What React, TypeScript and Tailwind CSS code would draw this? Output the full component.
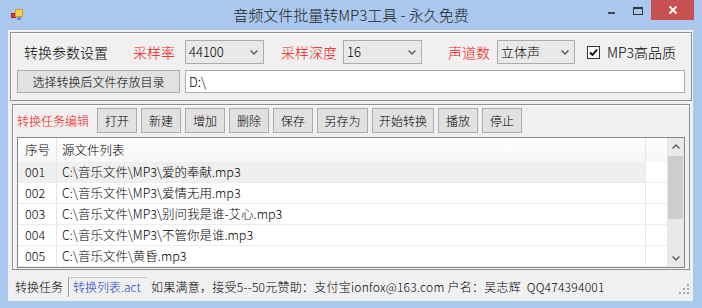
import React from "react";

const rows = [
  { no: "001", path: "C:\\音乐文件\\MP3\\爱的奉献.mp3", sel: true },
  { no: "002", path: "C:\\音乐文件\\MP3\\爱情无用.mp3" },
  { no: "003", path: "C:\\音乐文件\\MP3\\别问我是谁-艾心.mp3" },
  { no: "004", path: "C:\\音乐文件\\MP3\\不管你是谁.mp3" },
  { no: "005", path: "C:\\音乐文件\\黄昏.mp3" },
];

function Chevron({ up = false }: { up?: boolean }) {
  return (
    <svg width="8" height="5" viewBox="0 0 8 5" className="shrink-0">
      <path
        d={up ? "M0.6 4.4 L4 1 L7.4 4.4" : "M0.6 0.6 L4 4 L7.4 0.6"}
        fill="none"
        stroke="#5a5a5a"
        strokeWidth="1.4"
      />
    </svg>
  );
}

function Combo({ value, w }: { value: string; w: string }) {
  return (
    <div className={`${w} h-[24px] flex items-center justify-between pl-[3px] pr-[5px] border border-[#acacac] bg-[#e9e9e9] text-[13px] text-black`}>
      <span>{value}</span>
      <Chevron />
    </div>
  );
}

function Btn({ children, w = "w-[40px]" }: { children: React.ReactNode; w?: string }) {
  return (
    <div className={`${w} h-[25px] flex items-center justify-center border border-[#adadad] bg-[#e1e1e1] text-[12px] text-black`}>
      {children}
    </div>
  );
}

function AppIcon() {
  return (
    <svg width="16" height="16" viewBox="0 0 16 16">
      <rect x="1.5" y="5.5" width="4" height="4" fill="#d63a3a" stroke="#a82525" />
      <rect x="5.5" y="1.5" width="7" height="7" fill="#f7cf48" stroke="#c9a12c" />
      <rect x="7" y="9" width="4" height="3" fill="#6f90c9" />
    </svg>
  );
}

export default function App() {
  return (
    <div className="w-[702px] h-[308px] bg-[#aac8ee] flex flex-col font-['Noto_Sans_CJK_SC',sans-serif] font-light text-black overflow-hidden">
      {/* title bar */}
      <div className="h-[30px] grid grid-cols-[1fr_auto_1fr] shrink-0">
        <div className="pl-[10px] pt-[8px]">
          <AppIcon />
        </div>
        <div className="flex items-center text-[15px] text-[#222]">音频文件批量转MP3工具 - 永久免费</div>
        <div className="flex justify-end items-start pr-[8px]">
          <div className="w-[26px] h-[20px] flex items-center justify-center">
            <div className="w-[7px] h-[2px] bg-[#444] mt-[6px]" />
          </div>
          <div className="w-[27px] h-[20px] flex items-center justify-center">
            <div className="w-[10px] h-[8px] border border-t-2 border-[#333] mt-[2px]" />
          </div>
          <div className="w-[43px] h-[20px] bg-[#c75050] flex items-center justify-center">
            <svg width="10" height="10" viewBox="0 0 10 10">
              <path d="M1.5 1.5 L8.5 8.5 M8.5 1.5 L1.5 8.5" stroke="#fff" strokeWidth="1.8" />
            </svg>
          </div>
        </div>
      </div>

      {/* client */}
      <div className="ml-[8px] w-[685px] h-[271px] bg-[#f0f0f0] flex flex-col">
        {/* parameters group */}
        <div className="ml-[2px] mt-[2px] w-[682px] h-[69px] border border-[#8f8f8f] shadow-[inset_1px_1px_0_#fff] flex flex-col pt-[7px]">
          <div className="flex items-center pl-[13px] h-[24px] text-[14px]">
            <span className="w-[109px]">转换参数设置</span>
            <span className="w-[52px] text-[#f01010]">采样率</span>
            <Combo value="44100" w="w-[79px]" />
            <span className="ml-[17px] w-[62px] text-[#f01010]">采样深度</span>
            <Combo value="16" w="w-[79px]" />
            <span className="ml-[26px] w-[49px] text-[#f01010]">声道数</span>
            <Combo value="立体声" w="w-[78px]" />
            <div className="ml-[12px] w-[13px] h-[13px] border border-[#333] bg-white flex items-center justify-center">
              <svg width="9" height="9" viewBox="0 0 9 9">
                <path d="M1 4.5 L3.5 7 L8 1.5" fill="none" stroke="#000" strokeWidth="1.8" />
              </svg>
            </div>
            <span className="ml-[7px]">MP3高品质</span>
          </div>
          <div className="flex items-center pl-[6px] mt-[6px]">
            <div className="w-[163px] h-[23px] flex items-center justify-center border border-[#adadad] bg-[#e1e1e1] text-[12px]">
              选择转换后文件存放目录
            </div>
            <div className="ml-[5px] w-[500px] h-[23px] flex items-center pl-[3px] border border-[#abadb3] bg-white text-[13px]">
              D:\
            </div>
          </div>
        </div>

        {/* task group */}
        <div className="ml-[4px] mt-[3px] w-[678px] h-[166px] border border-[#8f8f8f] shadow-[inset_1px_1px_0_#fff] flex flex-col pt-[3px]">
          <div className="flex items-center pl-[4px]">
            <span className="w-[80px] text-[12px] text-[#f01010]">转换任务编辑</span>
            <div className="flex gap-[4px]">
              <Btn>打开</Btn>
              <Btn>新建</Btn>
              <Btn>增加</Btn>
              <Btn>删除</Btn>
              <Btn>保存</Btn>
              <Btn w="w-[51px]">另存为</Btn>
              <Btn w="w-[62px]">开始转换</Btn>
              <Btn>播放</Btn>
              <Btn>停止</Btn>
            </div>
          </div>

          <div className="mt-[4px] ml-[4px] w-[668px] h-[131px] border border-[#828790] bg-white flex text-[12.5px]">
            <div className="w-[649px] flex flex-col">
              <div className="h-[24px] flex items-center bg-gradient-to-b from-white to-[#f7f7f7]">
                <div className="w-[39px] h-full flex items-center pl-[7px] border-r border-[#e5e5e5]">序号</div>
                <div className="w-[589px] h-full flex items-center pl-[5px] border-r border-[#e5e5e5]">源文件列表</div>
                <div className="flex-1" />
              </div>
              {rows.map((r) => (
                <div key={r.no} className="h-[21px] flex border-b border-[#ececec]">
                  <div className={`w-[39px] h-full flex items-center pl-[7px] border-r border-[#e5e5e5] ${r.sel ? "bg-[#efefef]" : ""}`}>
                    {r.no}
                  </div>
                  <div className={`w-[589px] h-full flex items-center pl-[5px] border-r border-[#e5e5e5] ${r.sel ? "bg-[#efefef]" : ""}`}>
                    {r.path}
                  </div>
                  <div className="flex-1" />
                </div>
              ))}
            </div>
            <div className="w-[17px] bg-[#e9e9e9] flex flex-col">
              <div className="h-[17px] flex items-center justify-center">
                <Chevron up />
              </div>
              <div className="mt-[1px] mx-[1px] h-[63px] bg-[#cdcdcd]" />
              <div className="flex-1" />
              <div className="h-[17px] flex items-center justify-center">
                <Chevron />
              </div>
            </div>
          </div>
        </div>

        {/* status bar */}
        <div className="flex-1 flex items-center pl-[7px] pt-[2px] text-[12px]">
          <span>转换任务</span>
          <div className="ml-[5px] w-[79px] h-[20px] flex items-center pl-[4px] border-l border-t border-l-[#9a9a9a] border-t-[#c8c8c8] text-[#2143c4]">
            转换列表.act
          </div>
          <span className="ml-[4px] whitespace-nowrap tracking-[0.25px]">
            如果满意，接受5--50元赞助：支付宝ionfox@163.com 户名：吴志辉&nbsp;&nbsp;QQ474394001
          </span>
          <div className="ml-auto mr-[3px] self-end mb-[6px]">
            <svg width="11" height="11" viewBox="0 0 11 11">
              <rect x="8" y="0" width="2" height="2" fill="#a8a8a8" />
              <rect x="4" y="4" width="2" height="2" fill="#a8a8a8" />
              <rect x="8" y="4" width="2" height="2" fill="#a8a8a8" />
              <rect x="0" y="8" width="2" height="2" fill="#a8a8a8" />
              <rect x="4" y="8" width="2" height="2" fill="#a8a8a8" />
              <rect x="8" y="8" width="2" height="2" fill="#a8a8a8" />
            </svg>
          </div>
        </div>
      </div>
      <div className="flex-1" />
    </div>
  );
}
